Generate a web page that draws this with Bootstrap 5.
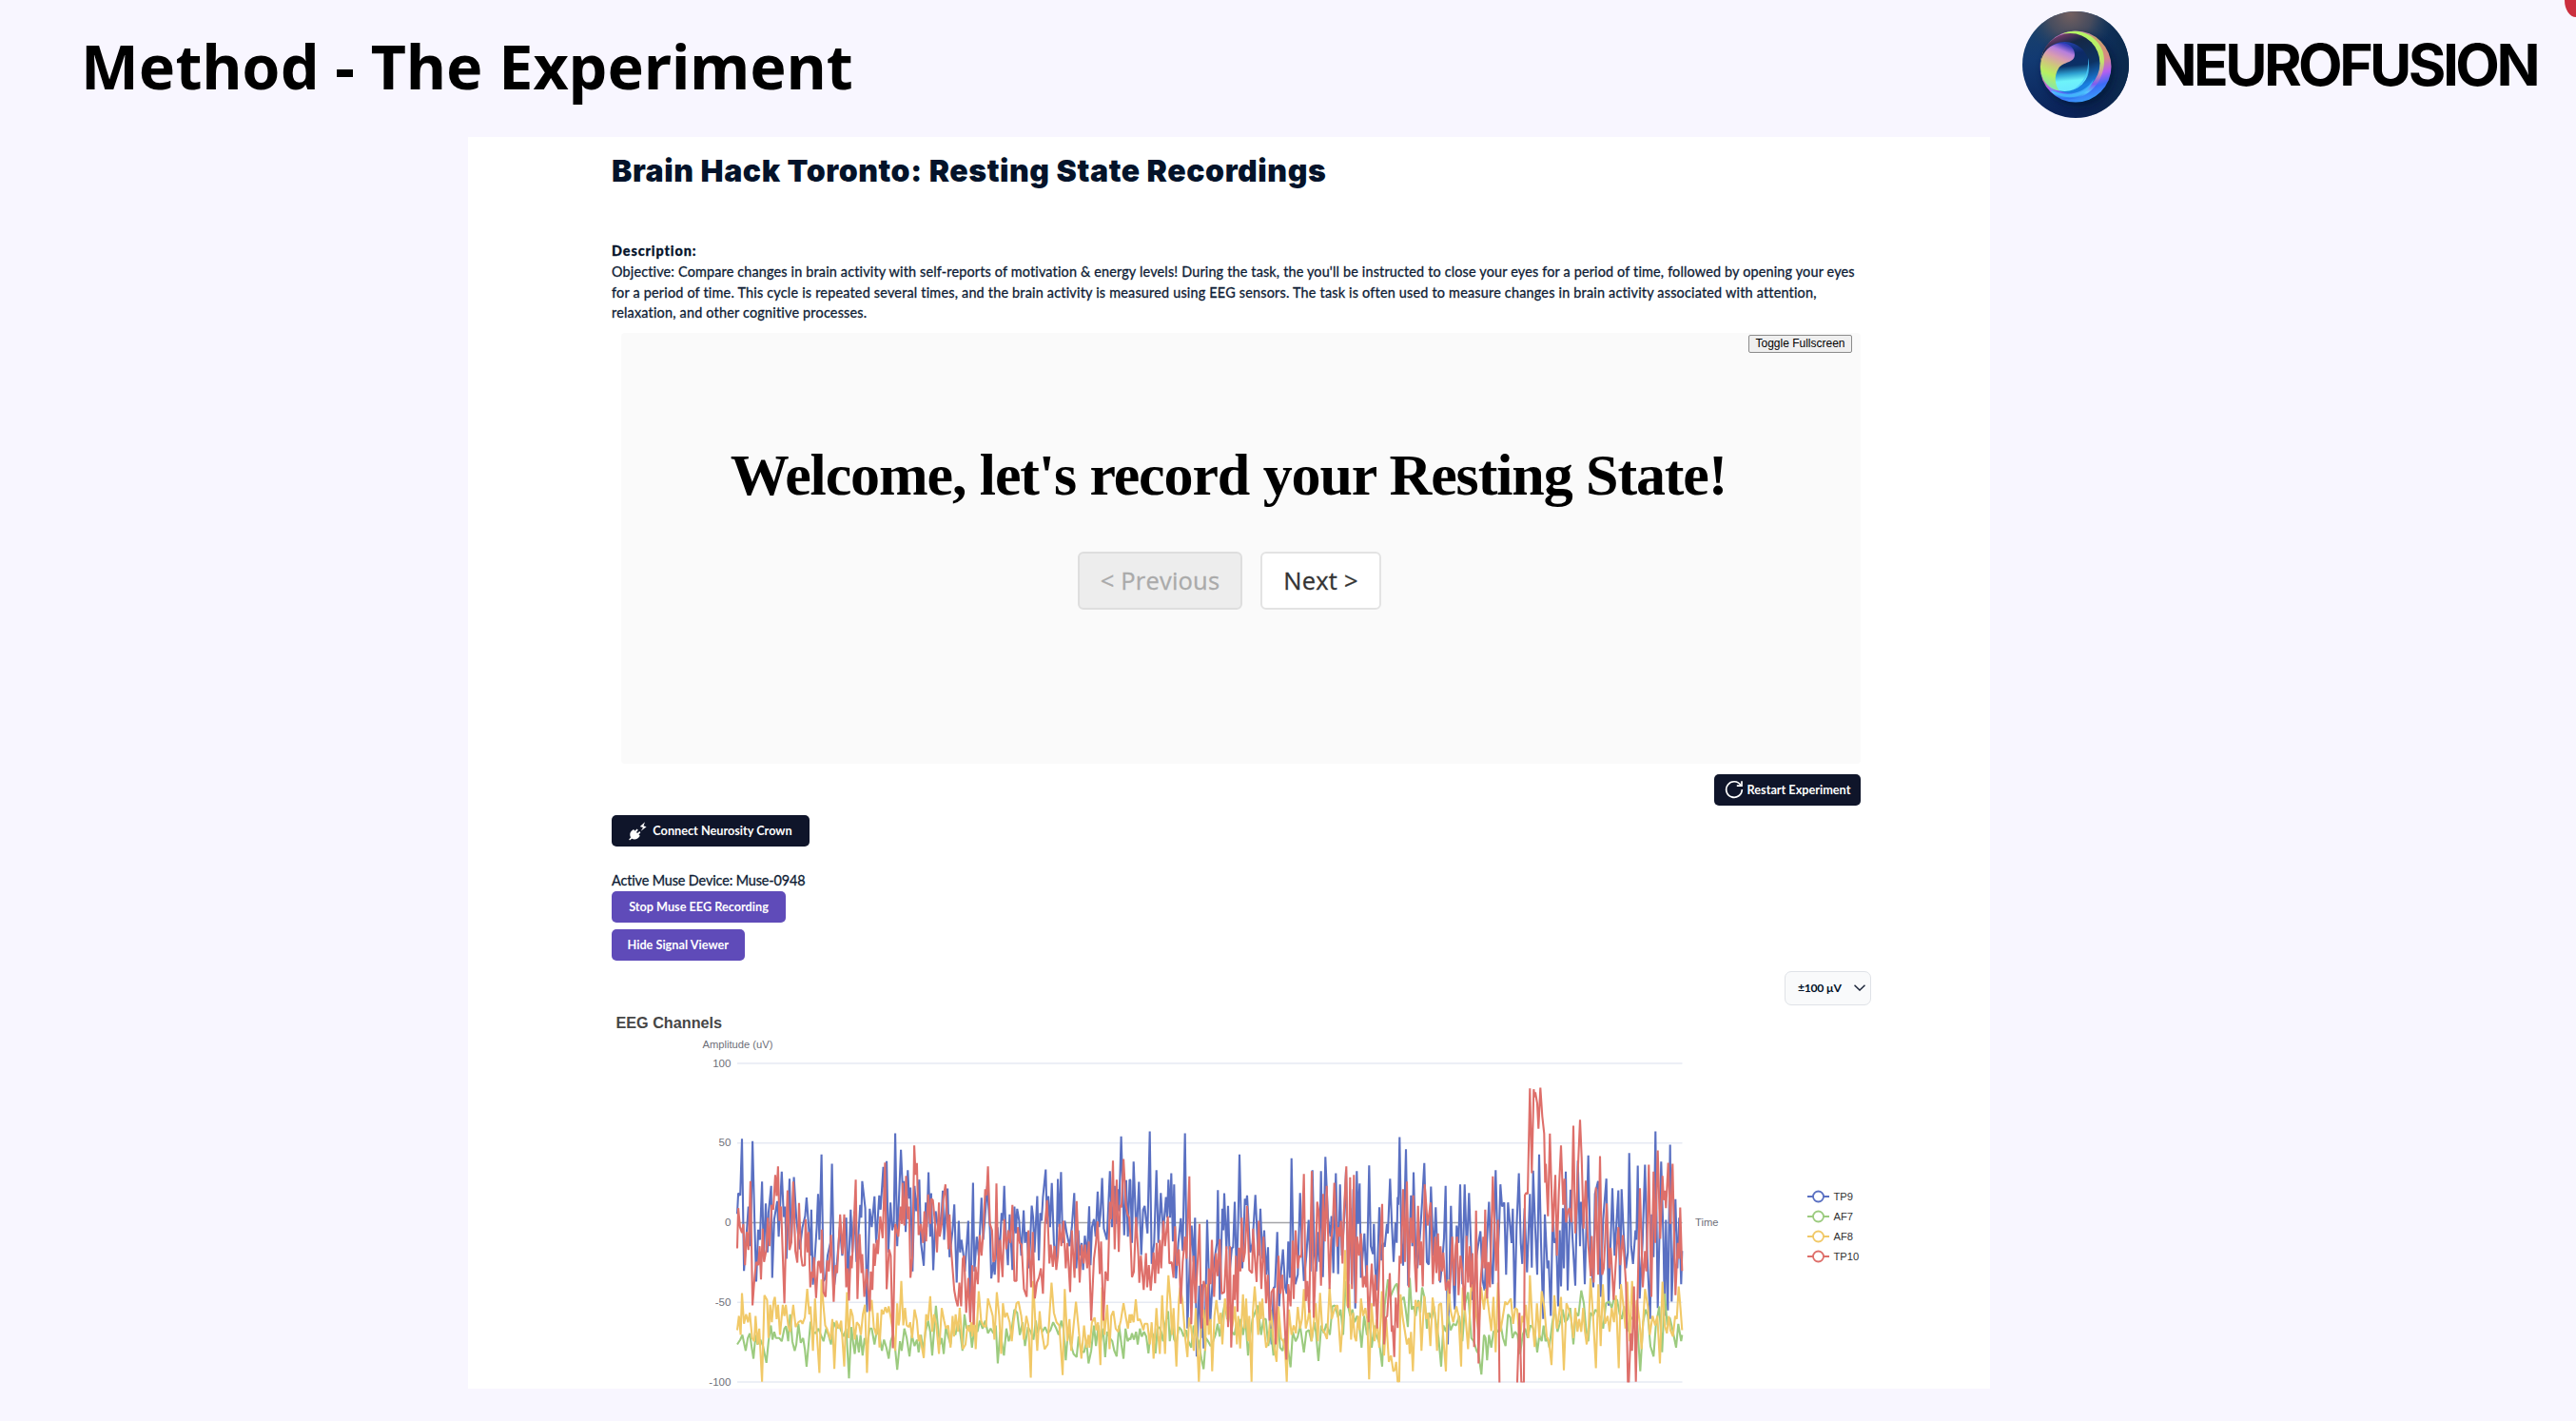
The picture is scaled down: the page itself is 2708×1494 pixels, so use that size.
<!DOCTYPE html>
<html lang="en">
<head>
<meta charset="utf-8">
<meta name="viewport" content="width=device-width, initial-scale=1">
<title>Method - The Experiment</title>
<link href="https://cdn.jsdelivr.net/npm/bootstrap@5.3.0/dist/css/bootstrap.min.css" rel="stylesheet">
<style>
  body { background: #f8f6ff; color: #04132a; font-family: Lato, "Open Sans", sans-serif; width: 2708px; height: 1494px; overflow: hidden; }
  .slide-head { height: 144px; padding: 0 41px 0 81px; }
  .slide-title { font: 700 64.5px/90px "Noto Sans", "Open Sans", sans-serif; letter-spacing: .03px; color: #000; padding-top: 24px; }
  .brand { padding-top: 12px; gap: 25px; }
  .brand-name { font: 700 60.5px/112px Inter, sans-serif; letter-spacing: -3.55px; color: #000; }
  .corner-mark { top: 0; right: 0; width: 12px; height: 18px; background: #cb2f3e; border-bottom-left-radius: 12px 18px; }
  .sheet { width: 1600px; height: 1315.5px; margin-left: 492px; padding: 16px 124px 0 151px; }
  .page-title { font: 900 32px/40px Inter, sans-serif; letter-spacing: .57px; height: 40px; }
  .desc { margin-top: 53px; font-size: 14.4px; line-height: 21.75px; letter-spacing: .173px; white-space: nowrap; color: #0d1b34; -webkit-text-stroke: .3px #0d1b34; }
  .desc-line2 { letter-spacing: .21px; }
  .desc-label { font-weight: 900; letter-spacing: .9px; color: #04132a; }
  .stage { width: 1303px; height: 453px; margin: 10px 0 0 10px; padding-top: 2px; background: #fafafa; border-radius: 4px; }
  .btn-toggle { font: 400 12px/17px "Liberation Sans", sans-serif; width: 109px; height: 19px; margin-right: 9px; padding: 0; border: 1px solid #8b8b8b; border-radius: 2px; background: #efefef; color: #000; }
  .welcome { font: 700 62px/74px "Liberation Serif", serif; letter-spacing: -1.1px; margin: 91px 26px 0 0; color: #000; }
  .nav-row { margin: 44px 24px 0 0; gap: 19px; }
  .nav-btn { font: 400 25.5px/57px "Open Sans", sans-serif; height: 61px; padding: 0; border: 2px solid #e3e3e3; border-radius: 6px; background: #fff; color: #333; letter-spacing: .2px; -webkit-text-stroke: .3px currentColor; }
  .nav-btn.prev { width: 173px; background: #ededed; border-color: #dedede; color: #aaa; }
  .nav-btn.next { width: 127px; }
  .act { font-size: 12.7px; font-weight: 700; line-height: 1; height: 33px; border: 0; border-radius: 5px; color: #fff; white-space: nowrap; padding: 0; }
  .act-dark { background: #0f152a; }
  .act-violet { background: #5f4bb9; }
  .act-restart { width: 154px; margin: 10.5px 12px 0 0; }
  .act-connect { width: 208px; margin-top: 10.5px; gap: 6px; }
  .act-stop { width: 183px; }
  .act-hide { width: 139.5px; margin-top: 7px; }
  .device { margin-top: 24.5px; font-size: 14.4px; line-height: 22px; letter-spacing: -.12px; color: #0d1b34; -webkit-text-stroke: .3px #0d1b34; }
  .range { width: 91px; height: 36.5px; padding: 0 5px 0 13px; border: 1px solid #dfe2e7; border-radius: 7px; background: #f9fafb; font-size: 12.2px; font-weight: 700; margin: 11px 0 0 1233px; letter-spacing: -.3px; }
  .eeg { margin: 2.5px 0 0 -3px; display: block; font-family: "Liberation Sans", sans-serif; font-size: 11.6px; }
</style>
</head>
<body>
<header class="slide-head d-flex justify-content-between align-items-start">
  <h1 class="slide-title m-0 ps-1">Method - The Experiment</h1>
  <div class="brand d-flex align-items-center">
    <svg width="112" height="112" viewBox="0 0 112 112">
      <defs>
        <linearGradient id="bg" x1="0" y1="0" x2=".2" y2="1"><stop offset="0" stop-color="#1c4468"/><stop offset=".45" stop-color="#123a72"/><stop offset="1" stop-color="#0a2258"/></linearGradient>
        <linearGradient id="bgr" x1="0" y1="0" x2="1" y2="0"><stop offset=".45" stop-color="#0c2146" stop-opacity="0"/><stop offset="1" stop-color="#0b2a4c"/></linearGradient>
        <radialGradient id="warm" cx=".45" cy=".02" r=".42"><stop offset="0" stop-color="#74605f"/><stop offset=".5" stop-color="#52505c" stop-opacity=".8"/><stop offset="1" stop-color="#25405c" stop-opacity="0"/></radialGradient>
        <linearGradient id="rim" x1=".35" y1="0" x2=".65" y2="1"><stop offset="0" stop-color="#c07ad8"/><stop offset=".22" stop-color="#c9a06c"/><stop offset=".5" stop-color="#d78a84"/><stop offset=".68" stop-color="#b45ff0"/><stop offset=".83" stop-color="#3b6cf5"/><stop offset="1" stop-color="#3aa2fa"/></linearGradient>
        <linearGradient id="rim2" x1="0" y1="0" x2="0" y2="1"><stop offset="0" stop-color="#b2f763"/><stop offset=".45" stop-color="#c0e36c"/><stop offset=".62" stop-color="#cf96a8"/><stop offset=".78" stop-color="#7d5cf0"/><stop offset=".9" stop-color="#55c8ff"/><stop offset="1" stop-color="#2a70f0"/></linearGradient>
        <linearGradient id="hole" x1="0" y1="0" x2=".35" y2="1"><stop offset="0" stop-color="#b25be0"/><stop offset=".14" stop-color="#6c3a66"/><stop offset=".3" stop-color="#152846"/><stop offset=".7" stop-color="#0c3263"/><stop offset="1" stop-color="#1a7fe0"/></linearGradient>
        <linearGradient id="disc" x1=".4" y1="0" x2=".5" y2="1"><stop offset="0" stop-color="#2342b0"/><stop offset=".25" stop-color="#0d2a66"/><stop offset=".5" stop-color="#0b3166"/><stop offset=".66" stop-color="#2d9fd0"/><stop offset=".8" stop-color="#6ef3fa"/><stop offset="1" stop-color="#6be8ff"/></linearGradient>
        <linearGradient id="lobe" x1=".6" y1="0" x2=".3" y2="1"><stop offset="0" stop-color="#3b3fc0"/><stop offset=".14" stop-color="#b77fdc"/><stop offset=".3" stop-color="#d99cb0"/><stop offset=".48" stop-color="#cfc67c"/><stop offset=".68" stop-color="#b9f060"/><stop offset=".9" stop-color="#8fe89a"/><stop offset="1" stop-color="#66e6e0"/></linearGradient>
        <filter id="soft" x="-30%" y="-30%" width="160%" height="160%"><feGaussianBlur stdDeviation="3.5"/></filter>
      </defs>
      <circle cx="56" cy="56" r="56" fill="url(#bg)"/><circle cx="56" cy="56" r="56" fill="url(#bgr)"/><circle cx="56" cy="56" r="56" fill="url(#warm)"/>
      <circle cx="59" cy="62" r="38" fill="#051430" opacity=".65" filter="url(#soft)"/>
      <circle cx="56" cy="58" r="37.5" fill="url(#rim)"/>
      <path d="M42 23.5C58 16 78 24 84.500 42C90 60 80 85 58 91C46 94 36 91 29 83C50 93 70 86 76 70C83 52 76 22 42 23.500Z" fill="url(#rim2)"/>
      <ellipse cx="50.500" cy="54.500" rx="31" ry="31.500" fill="url(#hole)"/>
      <path d="M28 80C44 92 66 87 75 71C68 96 38 94 28 80Z" fill="#43b9fb" opacity=".8"/>
      <circle cx="44.500" cy="58" r="26" fill="url(#disc)"/>
      <path d="M69 49C73 62 65 79 52 83C64 76 70 65 69 49Z" fill="#48c8ff" opacity=".8"/>
      <path d="M39 83.500C27 82 19 71 19 58C19 46 26 37 36 34C46 31 55 37 55 45C55 55 43 52 38 60C33 68 34 77 39 83.500Z" fill="url(#lobe)"/>
    </svg>
    <div class="brand-name">NEUROFUSION</div>
  </div>
</header>
<div class="corner-mark position-absolute"></div>

<main class="sheet bg-white">
  <h2 class="page-title m-0">Brain Hack Toronto: Resting State Recordings</h2>
  <div class="desc">
    <div class="desc-label">Description:</div>
    <div>Objective: Compare changes in brain activity with self-reports of motivation &amp; energy levels! During the task, the you'll be instructed to close your eyes for a period of time, followed by opening your eyes<br><span class="desc-line2">for a period of time. This cycle is repeated several times, and the brain activity is measured using EEG sensors. The task is often used to measure changes in brain activity associated with attention,<br>relaxation, and other cognitive processes.</span></div>
  </div>

  <section class="stage">
    <div class="d-flex justify-content-end"><button class="btn-toggle">Toggle Fullscreen</button></div>
    <div class="welcome text-center text-nowrap">Welcome, let's record your Resting State!</div>
    <div class="nav-row d-flex justify-content-center">
      <button class="nav-btn prev">&lt; Previous</button>
      <button class="nav-btn next">Next &gt;</button>
    </div>
  </section>

  <div class="d-flex justify-content-end">
    <button class="act act-dark act-restart d-flex align-items-center justify-content-center gap-1">
      <svg width="20" height="20" viewBox="0 0 20 20" fill="none" stroke="#fff" stroke-width="1.7"><path d="M17 5.600A8.300 8.300 0 1 0 18.300 10"/><path d="M18 1.200V6.200H12.800"/></svg>
      <span>Restart Experiment</span>
    </button>
  </div>
  <button class="act act-dark act-connect d-flex align-items-center justify-content-center">
    <svg width="19" height="20" viewBox="0 0 19 20" fill="#fff"><path d="M1 19.500L.2 18.600L2 16.500C.8 14 1 11.500 3 9.600L5 8L6.500 9.400L8.600 7.600L9.800 8.800L8 11L9 12L11.200 10L12.400 11.200L10.500 13.400L11.800 14.700C10 18 6.500 19.200 3.200 17.800Z"/><path d="M17 .3L11.800 5L15 6L12.700 9.800L18.600 5.300L15.500 4.200Z"/></svg>
    <span>Connect Neurosity Crown</span>
  </button>
  <div class="device">Active Muse Device: Muse-0948</div>
  <div class="d-flex flex-column align-items-start">
    <button class="act act-violet act-stop">Stop Muse EEG Recording</button>
    <button class="act act-violet act-hide">Hide Signal Viewer</button>
  </div>
  <div class="range d-flex align-items-center justify-content-between">
    <span>±100 µV</span>
    <svg width="12" height="7" viewBox="0 0 12 7" fill="none" stroke="#1a2338" stroke-width="1.500"><path d="M.5.8L6 6L11.500.8"/></svg>
  </div>
  <svg class="eeg" id="eeg" width="1360" height="399" viewBox="640 1060 1360 399"></svg>
</main>

<script src="https://cdn.jsdelivr.net/npm/bootstrap@5.3.0/dist/js/bootstrap.bundle.min.js"></script>
<script>
/* Sample runs: each strip has its own origin and scale, followed by raw x,y pairs. */
const strips = [
  { x: 630,  kx: 2.8, zero: 676 },
  { x: 1160, kx: 3,   zero: 496 },
  { x: 1500, kx: 3,   zero: 496 }
];
const series = [
{ name:'TP9', line:'#5a70c2', runs:[
"406,648 409,583 415,590 420,411 426,828 439,625 445,750 451,419 457,670 462,862 468,698 473,730 479,546 484,790 490,615 495,770 498,645 506,560 509,850 515,665 524,608 528,720 537,515 543,658 547,625 551,790 560,537 565,740 573,532 580,660 590,760 598,690 606,655 610,597 617,700 621,780 624,635 629,872 636,760 640,690 644,585 648,730 654,461 660,860 666,850 672,780 680,740 685,490 692,872 700,800 708,690 715,780 727,660 732,870 740,635 745,770 751,640 757,800 762,730 768,620 771,660 774,545 783,630 788,958 796,632 802,690 810,593 815,740 824,590 828,635 836,500 841,640 846,482 851,770 857,612 862,700 867,680 871,394 877,750 882,600 888,446 894,600 897,545 902,705 908,510 912,600 916,565 922,830 928,560 933,640 942,540 947,740 955,812 961,612 964,690 969,517 974,720 977,583 983,826 990,640 1000,710 1008,640 1011,575 1015,730 1025,568 1031,785 1040,700 1045,618 1052,865 1058,670 1062,770 1066,730 1072,780 1076,830 1086,670 1092,960 1100,550 1104,830 1111,720 1117,780 1125,597 1130,730 1135,660 1142,560 1150,700 1154,852 1160,800 1164,840 1172,690 1178,780 1184,645 1188,670 1192,560 1197,720 1203,810 1208,650 1216,825 1222,625 1226,710 1230,632 1236,670 1242,780 1249,637 1253,740 1258,705 1265,820 1273,622 1277,660 1281,770 1289,592 1294,795 1298,645 1302,670 1306,595 1314,508 1318,680 1322,592 1327,690 1332,551 1338,740 1345,800 1350,538 1354,690 1359,516 1364,740 1370,670 1376,710 1384,750 1391,690 1398,582 1404,820 1410,700 1414,780 1420,740 1424,825 1429,717 1436,780 1442,624 1446,810 1450,690 1456,665 1461,720 1467,578 1471,690 1475,650 1480,535 1485,695 1494,730 1503,513 1509,690 1517,560 1522,680 1526,570 1530,640 1536,404 1545,716 1551,542 1556,720 1561,540",
"85,362 90,560 95,303 104,545 112,367 119,598 125,455 130,443 139,530 146,208 152,626 160,560 167,330 173,560 181,402 188,530 197,415 201,480 205,360 210,480 214,340 219,555 223,375 229,672 236,560 244,482 250,585 257,214 261,500 265,830 272,620 278,505 284,620 289,480 294,918 302,695 308,860 312,690 316,893 322,760 327,487 337,810 345,660 352,600 358,560 361,393 367,740 375,452 378,520 381,403 388,580 393,443 399,640 405,575 409,575 414,430 420,670 425,480 429,281 438,640 446,420 449,440 453,410 463,590 470,560 479,408 488,600 495,452 501,610 507,520 513,660 519,573 524,800 530,880 537,700 541,700 548,525 554,760 560,650 566,580 573,700 578,720 583,555 588,670 593,293 599,600 605,690 613,660 620,402 626,570 632,680 640,600 647,487 653,650 659,330 665,590 671,650 677,525 681,620 686,333 692,668 700,288 708,480 716,540 719,475 725,655 733,340 740,658 746,375 752,600 760,470 765,330 772,680 779,450 783,690 788,390 794,767 799,333 803,500 808,372 812,670 823,530 830,690 838,315 843,570 850,595 853,500 857,640 862,710 870,447 877,615 882,560 887,572 894,500 897,530 904,357 909,490 915,620 921,495 925,560 928,415 930,440 934,226 940,560 945,632 954,264 961,695 970,410 974,570 978,337 984,560 990,640 998,540 1005,430 1012,308 1020,620 1026,628 1033,382 1041,600 1048,447 1052,560 1062,685 1070,600 1074,545 1079,380 1086,880 1096,443 1102,640 1108,770 1114,505 1120,560 1125,375 1132,690 1139,375 1146,590 1153,402 1160,600",
"144,740 150,690 157,600 164,550 169,523 176,680 182,710 189,560 196,430 203,640 208,690 217,330 224,600 229,480 232,375 237,445 244,432 250,660 256,432 262,500 267,560 271,452 277,768 283,510 290,340 296,560 301,626 308,450 316,653 325,405 331,638 335,332 341,500 348,660 354,281 360,560 367,800 372,470 380,640 384,615 391,790 397,455 402,560 408,545 414,760 419,520 423,697 429,450 432,640 438,335 444,710 453,392 459,540 468,695 476,300 483,570 486,430 492,510 498,690 509,284 516,600 525,700 530,405 540,365 548,730 556,485 566,357 573,758 585,387 592,600 604,394 609,705 614,390 621,540 628,640 634,590 638,276 644,570 650,626 658,520 661,550 665,316 671,735 680,560 688,313 695,600 704,800 709,470 715,605 721,208 728,765 739,303 746,560 750,790 754,487 760,773 767,250 772,745 784,422 790,640 796,480 802,690 805,585"]},
{ name:'AF7', line:'#9ccb7f', runs:[
"406,1060 415,1045 421,1030 431,1080 437,1040 443,1025 448,1065 454,1105 460,1030 466,1060 474,1045 482,1065 492,1118 498,1050 505,1000 510,1045 515,1020 520,1040 530,1040 537,1050 545,1010 550,1003 556,1050 562,965 568,1050 575,1080 580,1060 586,995 593,1055 600,1040 605,1075 610,1130 616,1060 622,988 628,1020 637,1025 645,1010 652,1030 660,1050 668,1010 676,1035 682,1060 690,990 698,1010 706,1000 713,1020 719,1035 727,1010 735,1167 742,1005 748,1060 752,1090 757,1030 764,1085 769,1030 775,1095 781,1040 788,1070 796,1010 802,1010 810,1060 817,1015 825,1035 832,1080 838,1045 845,1070 852,1105 858,1050 864,1030 871,1075 877,1140 885,1050 890,1080 898,1010 905,1040 913,1098 920,1030 928,1065 935,1045 940,1085 947,1030 953,1080 960,1020 968,985 974,1020 980,1095 991,938 997,1010 1003,1060 1008,1040 1014,1090 1020,1005 1027,1035 1034,1060 1040,1005 1048,1030 1056,990 1062,1020 1069,1080 1075,965 1081,1010 1090,1000 1097,1070 1105,1000 1113,1020 1120,985 1128,1010 1136,985 1144,1025 1152,1010 1160,1025 1167,1000 1173,1120 1180,1020 1191,1095 1198,1010 1205,1050 1213,1020 1222,950 1230,960 1238,1030 1246,990 1253,1065 1262,1005 1270,1020 1278,1045 1285,985 1290,1025 1297,1000 1304,1020 1312,1005 1320,1025 1328,1015 1336,990 1345,1010 1352,1030 1360,985 1366,1010 1373,1110 1380,1010 1388,1060 1396,1090 1405,1100 1411,1035 1418,1080 1427,1085 1434,1050 1440,1120 1448,1080 1456,1000 1462,1065 1469,1000 1475,1055 1483,1010 1489,1100 1495,1020 1503,1040 1510,1050 1516,1080 1523,1098 1530,1000 1537,1060 1543,1105 1549,1010 1555,1050 1561,1040",
"85,865 90,845 96,865 103,840 108,880 115,830 121,855 128,840 135,855 142,908 148,850 155,845 164,908 170,830 176,825 182,840 188,870 195,815 204,775 209,870 217,815 223,865 230,875 238,825 246,835 253,855 261,835 268,870 277,890 284,820 292,850 300,870 309,925 316,958 323,860 330,870 338,885 346,870 353,850 360,815 367,855 375,790 383,750 390,800 398,780 405,840 413,850 419,815 425,840 433,800 440,850 448,800 456,915 463,850 470,800 478,780 487,757 497,850 505,800 512,800 520,885 528,830 536,915 543,860 550,790 557,890 565,900 572,860 580,880 590,952 597,840 606,870 613,855 620,820 632,905 640,840 648,835 656,870 665,810 670,840 678,932 687,820 695,845 703,815 714,850 722,760 730,757 740,795 748,770 756,850 764,680 772,760 778,790 785,770 792,810 800,790 806,810 814,890 822,790 831,850 838,800 846,890 854,820 860,850 870,875 879,950 887,755 897,675 905,730 912,712 920,695 926,688 932,750 940,740 947,730 953,770 960,825 966,670 972,770 978,760 985,790 993,740 999,780 1005,700 1013,735 1020,830 1027,780 1035,800 1042,760 1050,820 1057,860 1065,950 1072,820 1080,840 1087,790 1095,835 1103,815 1112,820 1122,790 1132,870 1141,750 1150,715",
"140,860 148,870 157,900 163,910 172,975 180,850 185,860 190,930 196,850 203,890 210,840 217,835 224,840 233,820 240,860 248,885 256,785 263,795 270,860 278,840 286,850 294,910 302,850 310,830 318,860 326,820 333,825 341,845 348,905 355,850 362,870 368,820 374,870 380,860 386,890 395,815 403,765 412,840 420,810 428,770 436,810 444,800 452,765 462,880 470,780 478,790 487,710 495,750 502,830 509,870 516,780 524,790 532,770 540,780 548,800 556,830 565,750 575,745 583,765 590,735 600,740 608,785 615,800 622,760 632,840 640,790 648,800 656,780 664,820 673,965 682,810 690,770 697,790 705,885 715,918 722,820 733,760 742,905 750,720 758,820 766,795 774,830 786,890 793,815 802,870 805,850"]},
{ name:'AF8', line:'#f1c968', runs:[
"406,1015 411,970 416,1030 420,898 426,995 432,965 438,990 443,960 450,1040 456,1050 460,970 466,1060 471,1010 479,1178 486,905 494,920 498,1040 503,935 508,990 513,925 517,910 522,980 526,935 532,1030 540,935 545,970 549,935 556,1000 562,1020 571,935 578,1005 586,990 594,985 598,995 605,975 612,885 618,965 622,940 629,1080 635,915 640,1020 648,1150 654,855 659,930 665,1000 671,1012 680,1045 686,980 692,1137 698,985 706,1010 712,985 721,1130 729,895 734,1040 740,948 746,970 752,1045 758,990 765,1000 770,1030 776,965 782,935 788,1150 795,960 802,920 808,1005 815,1030 819,960 825,1070 831,950 836,965 842,942 847,960 852,940 858,975 864,1020 871,1080 877,930 881,1000 884,980 889,860 895,1000 900,945 905,1000 911,1005 915,990 921,1040 928,950 935,985 940,1050 944,1030 948,1060 955,1103 962,965 968,985 974,908 980,1020 985,965 992,1000 1000,1090 1008,945 1015,985 1020,1010 1027,1000 1034,1070 1040,970 1044,1035 1049,965 1056,1020 1061,945 1070,1075 1078,1060 1084,1000 1090,1020 1095,990 1098,1035 1103,965 1108,1075 1117,892 1124,985 1130,1000 1138,1005 1144,915 1152,945 1158,970 1163,1045 1170,895 1177,970 1183,1090 1188,930 1194,975 1200,960 1208,990 1214,1050 1220,985 1228,930 1234,925 1242,970 1250,1045 1257,970 1263,1000 1270,1165 1277,860 1283,980 1289,1080 1296,955 1301,1010 1311,1075 1320,1060 1331,865 1338,960 1346,990 1354,1000 1364,1157 1370,885 1378,1050 1384,980 1389,1080 1396,1000 1403,925 1411,1010 1419,1105 1427,1000 1434,1070 1440,1030 1443,1070 1450,990 1458,975 1463,1015 1468,990 1475,1125 1480,880 1487,1030 1495,935 1502,1075 1507,970 1513,955 1520,1010 1527,1020 1535,985 1543,930 1550,975 1556,1010 1561,965",
"85,812 89,785 95,810 102,738 108,805 115,800 120,815 126,835 130,815 139,815 146,880 152,810 158,925 167,765 173,855 178,910 185,725 194,910 200,760 205,662 211,740 216,850 221,765 230,950 238,740 242,700 249,740 258,860 265,920 270,795 277,830 285,900 291,765 301,998 309,800 316,770 321,900 326,690 332,850 338,800 343,965 350,790 356,740 365,815 370,780 375,880 383,735 388,775 393,810 399,760 405,830 410,800 415,760 421,880 425,790 431,893 440,722 445,830 450,735 456,870 460,790 467,998 471,780 477,697 484,790 488,850 493,745 497,800 501,735 507,830 513,890 520,870 528,770 537,880 546,935 552,760 560,860 567,870 573,900 578,998 585,770 593,850 600,820 607,845 613,762 620,830 626,800 632,705 638,830 645,800 650,770 656,870 663,815 670,750 676,870 683,717 690,830 698,845 705,863 713,700 720,800 727,775 733,760 738,757 748,905 755,800 762,582 769,760 775,690 781,865 787,780 792,855 797,870 803,790 808,835 812,735 819,790 826,765 832,800 838,990 845,750 855,870 862,800 870,890 878,712 885,915 892,800 900,935 907,915 914,965 919,960 923,935 928,998 933,998 937,722 943,790 950,835 957,880 963,860 966,910 970,840 976,965 984,740 990,760 997,745 1003,900 1012,727 1018,800 1024,780 1031,885 1038,732 1045,780 1052,900 1058,755 1065,750 1072,860 1080,965 1088,675 1094,770 1103,810 1113,760 1120,790 1128,950 1133,700 1141,780 1150,895 1160,690",
"144,710 150,710 156,790 163,840 171,700 180,770 186,705 194,760 203,838 210,730 217,905 224,685 232,840 240,790 247,745 253,755 265,735 272,815 279,765 285,770 293,880 300,790 305,810 312,755 320,860 325,662 332,800 340,888 347,750 355,860 362,712 370,760 378,855 385,870 393,945 402,725 410,830 415,800 423,730 432,962 440,750 448,770 455,800 462,860 468,765 475,840 480,800 487,840 493,765 498,835 504,880 510,830 516,670 524,790 533,955 541,690 548,885 555,690 562,815 570,790 576,840 583,765 590,810 596,725 605,955 612,690 620,760 626,830 632,682 640,870 647,680 655,830 662,740 670,800 677,895 688,705 697,760 703,850 712,790 720,820 727,790 735,940 743,682 750,820 757,845 763,790 768,835 776,855 783,790 788,800 794,697 800,770 805,835"]},
{ name:'TP10', line:'#de6f6a', runs:[
"406,757 409,630 414,690 420,708 424,680 429,810 434,705 439,762 445,545 451,937 457,850 462,800 468,810 472,750 476,855 481,695 485,800 492,760 496,660 501,750 507,620 512,635 518,525 522,592 526,498 530,670 535,625 539,745 545,930 550,700 554,574 560,762 565,740 571,546 577,765 583,802 588,614 594,780 598,812 605,810 607,665 613,770 616,705 621,880 626,830 629,850 632,785 638,914 644,800 648,798 652,835 655,698 660,895 666,910 671,795 676,830 682,714 690,926 695,810 700,835 709,650 716,775 721,650 727,880 731,820 735,922 740,780 743,820 749,690 755,540 760,917 766,712 772,835 774,775 780,910 787,822 796,955 799,830 804,888 808,742 811,812 817,730 820,775 827,656 834,725 841,486 846,886 853,760 858,780 864,1072 871,680 880,720 887,625 891,680 893,550 898,685 903,528 908,665 912,625 916,850 922,780 927,432 931,525 935,488 940,715 947,680 953,740 957,640 962,735 968,587 974,680 977,600 982,605 990,700 994,770 1000,612 1002,720 1008,680 1012,605 1019,555 1025,690 1028,760 1031,650 1035,750 1040,820 1045,890 1050,920 1055,940 1060,865 1065,940 1070,790 1074,780 1080,960 1086,850 1092,990 1098,810 1102,998 1107,815 1114,870 1120,715 1125,780 1130,710 1136,570 1140,590 1144,498 1150,680 1156,700 1160,800 1165,790 1169,552 1175,865 1180,730 1187,848 1192,665 1198,760 1204,700 1210,740 1216,620 1222,860 1228,860 1232,690 1238,740 1243,745 1250,885 1258,910 1263,700 1271,880 1276,705 1282,915 1288,865 1294,850 1300,820 1306,900 1312,680 1318,605 1325,805 1329,745 1335,815 1340,750 1345,825 1350,780 1355,680 1360,750 1366,670 1373,820 1378,740 1386,895 1391,700 1399,850 1405,608 1414,865 1420,745 1426,805 1430,745 1436,820 1441,735 1448,985 1456,790 1462,740 1467,672 1473,838 1477,735 1484,985 1490,830 1497,860 1503,610 1507,665 1512,480 1517,760 1523,540 1529,768 1533,620 1537,628 1543,475 1550,620 1555,650 1560,660",
"85,535 90,668 96,650 103,478 110,600 113,686 118,600 127,708 134,592 138,700 143,630 149,710 158,590 163,687 168,560 173,657 178,550 182,640 189,490 194,570 203,476 208,625 215,620 221,670 226,507 232,632 238,580 244,752 250,620 257,540 262,610 266,485 271,350 277,816 284,600 290,750 297,620 303,500 309,830 316,680 322,700 328,820 332,640 338,690 342,550 349,730 355,592 360,665 367,548 373,720 381,715 388,570 393,825 399,570 403,890 411,660 414,740 418,600 423,777 427,575 432,650 436,480 441,620 446,590 453,443 460,645 469,655 472,515 477,600 483,683 490,490 498,705 505,540 513,750 518,660 524,805 530,715 537,703 543,880 552,600 558,720 564,660 570,780 577,928 583,690 590,760 597,552 600,737 606,520 613,640 618,600 624,605 632,342 638,743 643,680 649,780 657,333 663,796 667,700 674,430 679,460 686,695 693,405 698,555 704,380 713,705 718,550 723,510 728,370 737,572 740,510 744,540 749,490 754,625 758,470 766,318 772,765 778,353 784,705 790,345 796,750 800,540 806,600 812,530 818,700 824,665 828,700 831,630 836,810 846,625 853,760 857,660 863,830 868,690 873,560 879,437 885,880 891,795 895,790 903,655 909,840 912,820 917,920 922,732 928,828 934,600 938,625 945,390 951,620 957,366 963,700 968,480 974,560 977,410 982,625 987,715 992,443 998,630 1002,555 1007,697 1013,375 1018,440 1022,505 1032,432 1039,690 1046,540 1050,655 1055,530 1059,680 1063,570 1068,650 1072,590 1080,710 1084,690 1087,680 1092,720 1100,540 1106,695 1111,570 1115,540 1120,725 1126,600 1132,650 1139,772 1145,537 1150,685 1155,570 1158,700",
"144,592 149,888 155,458 163,940 169,690 174,620 178,540 181,640 184,455 190,735 194,620 199,700 208,350 218,648 224,487 229,1000 232,1100 282,1100 285,1000 292,780 298,1000 306,1000 309,410 313,402 318,405 325,72 331,340 337,75 340,100 342,85 348,120 352,200 358,70 364,160 370,215 373,370 375,310 382,476 388,215 397,525 405,345 410,600 416,400 423,252 430,440 434,357 439,495 445,460 449,450 456,495 462,190 468,530 473,430 475,360 483,171 488,290 494,515 501,363 507,540 517,665 520,538 526,685 533,385 540,660 546,286 553,660 558,640 562,560 567,435 575,640 580,575 589,740 598,585 604,510 610,630 618,535 628,690 634,1000 637,1000 643,845 647,900 653,697 659,998 665,700 672,387 681,700 688,585 692,650 700,313 708,730 715,335 720,560 728,268 736,547 743,348 747,425 751,395 754,450 761,307 768,500 775,310 784,725 791,560 796,610 799,448 805,648"]}
];
const Y0 = 1285.5, PX = 1.675;                      // axis zero, pixels per microvolt
const parts = ['<text x="647.5" y="1081" font-size="16.2" font-weight="700" fill="#464646">EEG Channels</text>',
  '<text x="775.5" y="1102" text-anchor="middle" font-size="11.2" fill="#6e7079">Amplitude (uV)</text>',
  '<clipPath id="plot"><rect x="773" y="1110" width="997" height="343.5"/></clipPath>'];
for (const v of [100, 50, 0, -50, -100]) {
  const y = Y0 - v * PX;
  parts.push(`<line x1="775" x2="1768.5" y1="${y}" y2="${y}" stroke="${v ? '#e6eaf3' : '#a3a4a8'}" stroke-width="${v ? 1.7 : 1.5}"/>`,
             `<text x="768.5" y="${y + 3.5}" text-anchor="end" fill="#6e7079">${v}</text>`);
}
for (const s of series) {
  const pts = s.runs.flatMap((run, i) => run.split(' ').map(p => {
    const [cx, cy] = p.split(',').map(Number), k = strips[i];
    return (k.x + cx / k.kx).toFixed(1) + ',' + (Y0 - (k.zero - cy) / 3).toFixed(1);
  }));
  parts.push(`<polyline clip-path="url(#plot)" points="${pts.join(' ')}" fill="none" stroke="${s.line}" stroke-width="2.1" stroke-linejoin="bevel"/>`);
}
parts.push('<text x="1782" y="1289" font-size="11.2" fill="#6e7079">Time</text>');
series.forEach((s, i) => {
  const y = 1258 + i * 21;
  parts.push(`<path d="M1900 ${y}h23" stroke="${s.line}" stroke-width="2"/><circle cx="1911.5" cy="${y}" r="5.5" fill="#fff" stroke="${s.line}" stroke-width="1.8"/>`,
             `<text x="1927.5" y="${y + 4}" font-size="11.2" fill="#333">${s.name}</text>`);
});
document.getElementById('eeg').innerHTML = parts.join('');
</script>
</body>
</html>
